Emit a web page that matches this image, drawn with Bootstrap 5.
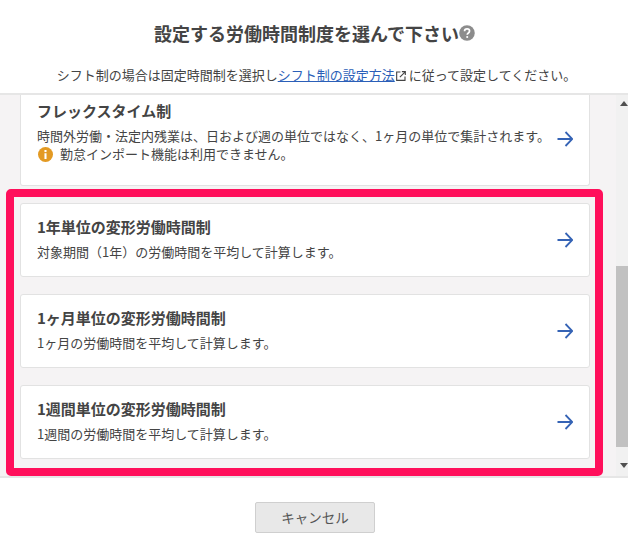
<!DOCTYPE html>
<html lang="ja">
<head>
<meta charset="utf-8">
<title>労働時間制度</title>
<link rel="stylesheet" href="https://cdn.jsdelivr.net/npm/bootstrap@5.3.0/dist/css/bootstrap.min.css">
<style>
html, body { height: 557px; overflow: hidden; }
body { font-family: "Noto Sans CJK JP", "Liberation Sans", sans-serif; color: #333; background: #fff; }
.modal-sheet { width: 628px; height: 557px; }
.sheet-head { height: 95px; border-bottom: 2px solid #e6e6e6; padding-top: 19px; }
.sheet-title { font-size: 18px; font-weight: 700; line-height: 28px; color: #444; margin: 0 0 0 1px; }
.sheet-note { font-size: 13px; line-height: 20px; margin: 18px 0 0 5px; color: #444; }
.sheet-note a { color: #2b5fb8; }
.note-icon { margin: 0 3px 0 1px; }
.sheet-body { height: 383px; background: #f5f3f4; border-bottom: 2px solid #e6e6e6; position: relative; overflow: hidden; }
.option-list { width: 611px; padding: 0 21px 0 20px; gap: 17px; }
.option-item { height: 74px; background: #fff; border: 1px solid #e2e2e2; border-radius: 3px; padding: 0 16px 3px; }
.option-item.first-item { height: 91px; border-top: 0; border-radius: 0 0 3px 3px; padding: 5px 16px 0; align-items: flex-start !important; }
.option-name { font-size: 15px; font-weight: 700; line-height: 22px; color: #444; margin: 0 0 4px; }
.option-desc { font-size: 13px; line-height: 20px; color: #444; margin: 0; }
.first-item .option-name { margin-bottom: 5px; }
.first-item .option-desc { line-height: 18px; white-space: nowrap; }
.arrow-icon { width: 16px; height: 16px; flex: none; margin-top: 3px; }
.first-item .arrow-icon { margin-top: 31px; }
.warn-line { gap: 7px; padding-left: 1px; }
.scroll-rail { width: 12px; background: #f1f1f1; position: absolute; top: 0; right: 0; bottom: 0; }
.scroll-thumb { height: 181px; background: #c1c1c1; margin-top: 171px; }
.scroll-up { position: absolute; top: 6px; left: 4px; width: 0; height: 0; border: 4px solid transparent; border-top: 0; border-bottom: 5px solid #505050; }
.scroll-down { position: absolute; bottom: 8px; left: 4px; width: 0; height: 0; border: 4px solid transparent; border-bottom: 0; border-top: 5px solid #505050; }
.focus-frame { position: absolute; left: 6px; top: 94px; width: 597px; height: 287px; border: 8px solid #ff0f5b; border-radius: 5px; pointer-events: none; }
.sheet-foot { padding: 24px 0 0 2px; }
.cancel-btn { width: 120px; height: 31px; background: #e8e8e8; border: 1px solid #cfcfcf; border-radius: 2px; color: #555; font-size: 13.5px; line-height: 1; padding: 0; }
</style>
</head>
<body>
<div class="modal-sheet d-flex flex-column">
  <header class="sheet-head text-center">
    <h1 class="sheet-title d-flex justify-content-center align-items-center">設定する労働時間制度を選んで下さい<svg width="16" height="16" viewBox="0 0 15 15"><circle cx="7.5" cy="7.5" r="7.300" fill="#8c8c8c"/><path d="M5.2 5.9c0-1.400 1-2.200 2.400-2.200s2.300.8 2.300 2c0 1.900-2.200 1.700-2.200 3.500" fill="none" stroke="#fff" stroke-width="1.600"/><circle cx="7.700" cy="11.300" r="1" fill="#fff"/></svg></h1>
    <p class="sheet-note">シフト制の場合は固定時間制を選択し<a href="#">シフト制の設定方法</a><svg class="note-icon" width="10" height="10" viewBox="0 0 9 9" fill="none" stroke="#444" stroke-width="1"><path d="M4 .9H.6v7.500h7.500V5"/><path d="M3.500 5.500 8.300.7M5.300.6h3.100v3.100"/></svg>に従って設定してください。</p>
  </header>
  <main class="sheet-body">
    <div class="option-list d-flex flex-column">
      <div class="option-item first-item d-flex justify-content-between">
        <div>
          <p class="option-name">フレックスタイム制</p>
          <p class="option-desc">時間外労働・法定内残業は、日および週の単位ではなく、1ヶ月の単位で集計されます。</p>
          <p class="option-desc warn-line d-flex align-items-center"><svg width="15" height="15" viewBox="0 0 13 13"><circle cx="6.500" cy="6.500" r="6.500" fill="#e39a23"/><rect x="5.600" y="5.400" width="1.800" height="5" fill="#fff"/><rect x="5.600" y="2.600" width="1.800" height="1.800" fill="#fff"/></svg>勤怠インポート機能は利用できません。</p>
        </div>
        <svg class="arrow-icon" viewBox="0 0 16 16" fill="none" stroke="#3563b5" stroke-width="1.800"><path d="M.5 8h14.500M8.500 1l6.800 7-6.800 7"/></svg>
      </div>
      <div class="option-item d-flex justify-content-between align-items-center">
        <div><p class="option-name">1年単位の変形労働時間制</p><p class="option-desc">対象期間（1年）の労働時間を平均して計算します。</p></div>
        <svg class="arrow-icon" viewBox="0 0 16 16" fill="none" stroke="#3563b5" stroke-width="1.800"><path d="M.5 8h14.500M8.500 1l6.800 7-6.800 7"/></svg>
      </div>
      <div class="option-item d-flex justify-content-between align-items-center">
        <div><p class="option-name">1ヶ月単位の変形労働時間制</p><p class="option-desc">1ヶ月の労働時間を平均して計算します。</p></div>
        <svg class="arrow-icon" viewBox="0 0 16 16" fill="none" stroke="#3563b5" stroke-width="1.800"><path d="M.5 8h14.500M8.500 1l6.800 7-6.800 7"/></svg>
      </div>
      <div class="option-item d-flex justify-content-between align-items-center">
        <div><p class="option-name">1週間単位の変形労働時間制</p><p class="option-desc">1週間の労働時間を平均して計算します。</p></div>
        <svg class="arrow-icon" viewBox="0 0 16 16" fill="none" stroke="#3563b5" stroke-width="1.800"><path d="M.5 8h14.500M8.500 1l6.800 7-6.800 7"/></svg>
      </div>
    </div>
    <div class="scroll-rail"><span class="scroll-up"></span><div class="scroll-thumb"></div><span class="scroll-down"></span></div>
    <div class="focus-frame"></div>
  </main>
  <footer class="sheet-foot text-center">
    <button type="button" class="btn cancel-btn">キャンセル</button>
  </footer>
</div>
<script src="https://cdn.jsdelivr.net/npm/bootstrap@5.3.0/dist/js/bootstrap.bundle.min.js"></script>
</body>
</html>
